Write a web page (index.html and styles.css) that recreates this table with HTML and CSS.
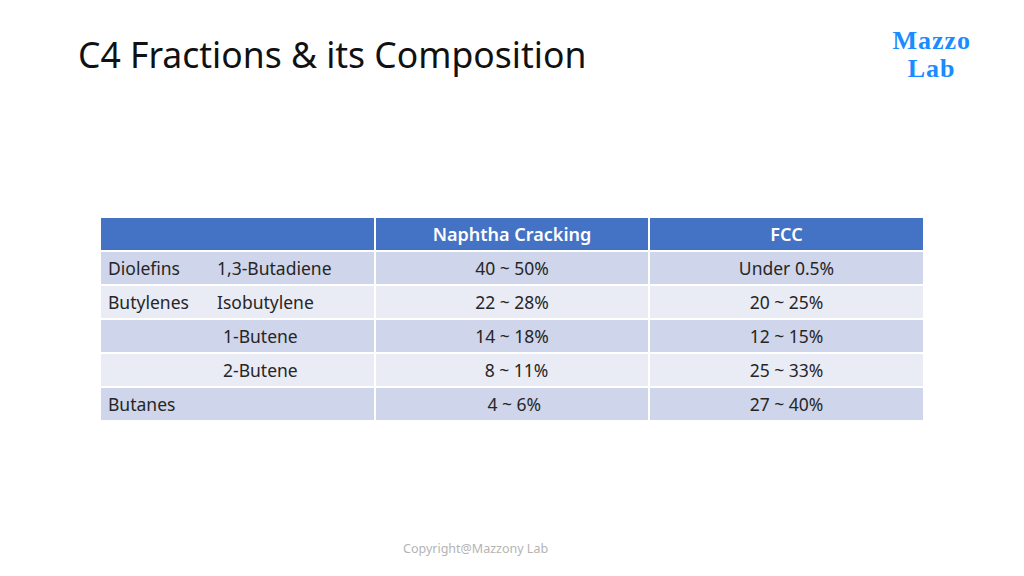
FILE: index.html
```html
<!DOCTYPE html>
<html>
<head>
<meta charset="utf-8">
<link rel="stylesheet" href="styles.css">
</head>
<body>
<div class="slide">
  <header class="top">
    <h1 class="title">C4 Fractions &amp; its Composition</h1>
    <div class="logo"><div>Mazzo</div><div>Lab</div></div>
  </header>
  <table class="comp">
    <colgroup><col class="c1"><col class="c2"><col class="c3"></colgroup>
    <thead>
      <tr><th></th><th>Naphtha Cracking</th><th>FCC</th></tr>
    </thead>
    <tbody>
      <tr class="odd"><td><span class="cat">Diolefins</span><span class="sub">1,3-Butadiene</span></td><td>40 ~ 50%</td><td>Under 0.5%</td></tr>
      <tr class="even"><td><span class="cat">Butylenes</span><span class="sub">Isobutylene</span></td><td>22 ~ 28%</td><td>20 ~ 25%</td></tr>
      <tr class="odd"><td><span class="cat"></span><span class="sub indent">1-Butene</span></td><td>14 ~ 18%</td><td>12 ~ 15%</td></tr>
      <tr class="even"><td><span class="cat"></span><span class="sub indent">2-Butene</span></td><td>&nbsp;&nbsp;8 ~ 11%</td><td>25 ~ 33%</td></tr>
      <tr class="odd"><td><span class="cat">Butanes</span></td><td>&nbsp;4 ~ 6%</td><td>27 ~ 40%</td></tr>
    </tbody>
  </table>
  <footer class="copy">Copyright@Mazzony Lab</footer>
</div>
</body>
</html>
```
FILE: styles.css
```css
html, body {
  margin: 0;
  padding: 0;
  background: #ffffff;
}
.slide {
  width: 1024px;
  height: 576px;
  position: relative;
  font-family: "Noto Sans", "Open Sans", sans-serif;
  color: #262626;
  display: flex;
  flex-direction: column;
}
.top {
  display: flex;
  justify-content: space-between;
  align-items: flex-start;
  padding: 28px 53px 0 78px;
  height: 110px;
  box-sizing: border-box;
}
.title {
  margin: 0;
  font-weight: 400;
  font-size: 35.5px;
  line-height: 52px;
  color: #111111;
}
.logo {
  font-family: "Liberation Serif", "DejaVu Serif", serif;
  font-weight: 700;
  font-size: 26px;
  line-height: 28px;
  letter-spacing: 1px;
  color: #1a8cff;
  text-align: center;
  margin-top: -1px;
  display: flex;
  flex-direction: column;
  align-items: center;
}
.comp {
  margin: 108px 0 0 101px;
  width: 822px;
  border-collapse: collapse;
  border-style: hidden;
  table-layout: fixed;
  font-size: 17.5px;
}
.comp th, .comp td {
  height: 32px;
  padding: 0;
  border: 2px solid #ffffff;
  text-align: center;
  color: #262626;
}
.comp th {
  background: #4472c4;
  color: #ffffff;
  font-weight: 600;
  font-size: 18px;
}
.comp tr.odd td { background: #cfd5ea; }
.comp tr.even td { background: #e9ebf5; }
.comp td:first-child {
  text-align: left;
  padding-left: 7px;
}
.cat {
  display: inline-block;
  width: 109px;
}
.sub.indent {
  padding-left: 6px;
}
.copy {
  position: absolute;
  left: 403px;
  top: 540px;
  font-size: 12.5px;
  color: #b4b4b4;
}
```
